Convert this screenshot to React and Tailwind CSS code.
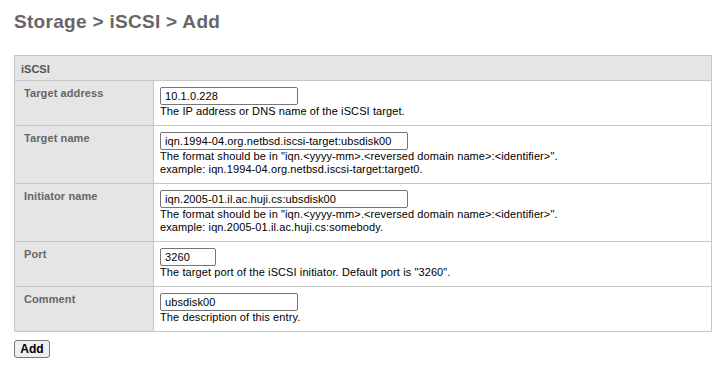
import React from 'react';

const rows = [
  {
    label: 'Target address',
    value: '10.1.0.228',
    width: 'w-[138px]',
    help: ['The IP address or DNS name of the iSCSI target.'],
  },
  {
    label: 'Target name',
    value: 'iqn.1994-04.org.netbsd.iscsi-target:ubsdisk00',
    width: 'w-[248px]',
    help: [
      'The format should be in "iqn.<yyyy-mm>.<reversed domain name>:<identifier>".',
      'example: iqn.1994-04.org.netbsd.iscsi-target:target0.',
    ],
  },
  {
    label: 'Initiator name',
    value: 'iqn.2005-01.il.ac.huji.cs:ubsdisk00',
    width: 'w-[248px]',
    help: [
      'The format should be in "iqn.<yyyy-mm>.<reversed domain name>:<identifier>".',
      'example: iqn.2005-01.il.ac.huji.cs:somebody.',
    ],
  },
  {
    label: 'Port',
    value: '3260',
    width: 'w-[56px]',
    help: ['The target port of the iSCSI initiator. Default port is "3260".'],
  },
  {
    label: 'Comment',
    value: 'ubsdisk00',
    width: 'w-[138px]',
    help: ['The description of this entry.'],
  },
];

export default function App() {
  return (
    <div className="min-h-[365px] bg-white px-[14px] font-['Liberation_Sans',Arial,sans-serif] text-[11px] leading-[13px] text-black">
      {/* page title */}
      <h1 className="pt-[10px] text-[19px] leading-[24px] font-bold tracking-[0.3px] text-[#666]">
        Storage &gt; iSCSI &gt; Add
      </h1>

      {/* form table */}
      <div className="mt-[21px] w-[698px] border-t border-l border-[#c6c6c6]">
        <div className="border-r border-b border-[#c6c6c6] bg-[#e5e5e5] px-[6px] pt-[7px] pb-[4px] font-bold text-[#555]">
          iSCSI
        </div>
        {rows.map((r) => (
          <div key={r.label} className="grid grid-cols-[139px_1fr]">
            <div className="border-r border-b border-[#c6c6c6] bg-[#e5e5e5] pl-[9px] pt-[6px] font-bold tracking-[0.1px] text-[#666]">
              {r.label}
            </div>
            <div className="border-r border-b border-[#c6c6c6] px-[6px] pt-[6px] pb-[7px] tracking-[0.1px]">
              <input
                readOnly
                value={r.value}
                className={`${r.width} block h-[18px] rounded-[2px] border border-[#767676] bg-white px-[4px] text-[11px] leading-[16px] text-black outline-none`}
              />
              {r.help.map((h) => (
                <div key={h}>{h}</div>
              ))}
            </div>
          </div>
        ))}
      </div>

      <button className="mt-[8px] h-[18px] w-[36px] rounded-[3px] border border-[#767676] bg-[#efefef] text-[12px] leading-[16px] font-bold text-black">
        Add
      </button>
    </div>
  );
}
